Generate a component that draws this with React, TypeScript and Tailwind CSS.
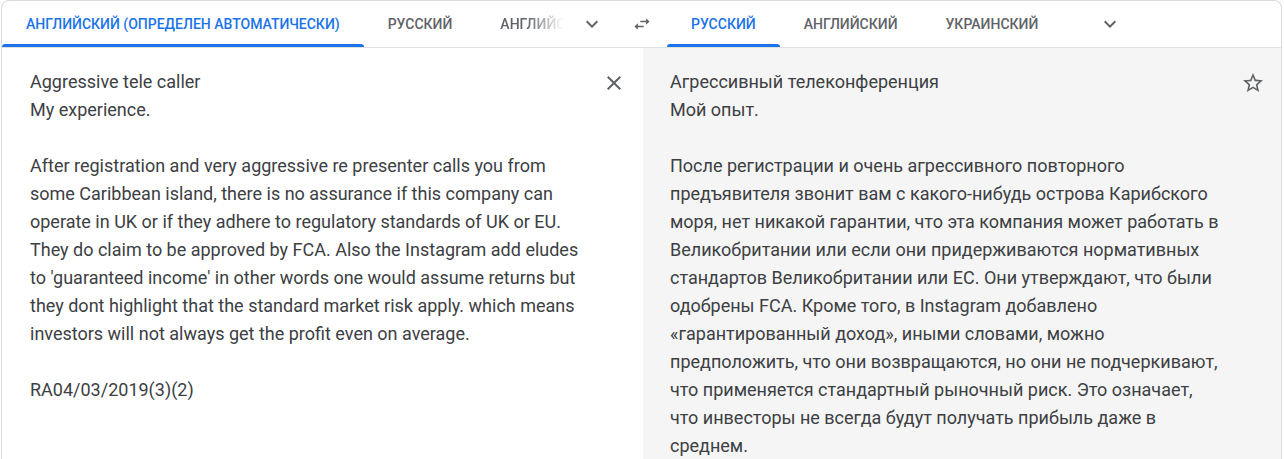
import React from 'react'

const sourceLines = [
  'Aggressive tele caller',
  'My experience.',
  '',
  'After registration and very aggressive re presenter calls you from',
  'some Caribbean island, there is no assurance if this company can',
  'operate in UK or if they adhere to regulatory standards of UK or EU.',
  'They do claim to be approved by FCA. Also the Instagram add eludes',
  "to 'guaranteed income' in other words one would assume returns but",
  'they dont highlight that the standard market risk apply. which means',
  'investors will not always get the profit even on average.',
  '',
  'RA04/03/2019(3)(2)',
]

const targetLines = [
  'Агрессивный телеконференция',
  'Мой опыт.',
  '',
  'После регистрации и очень агрессивного повторного',
  'предъявителя звонит вам с какого-нибудь острова Карибского',
  'моря, нет никакой гарантии, что эта компания может работать в',
  'Великобритании или если они придерживаются нормативных',
  'стандартов Великобритании или ЕС. Они утверждают, что были',
  'одобрены FCA. Кроме того, в Instagram добавлено',
  '«гарантированный доход», иными словами, можно',
  'предположить, что они возвращаются, но они не подчеркивают,',
  'что применяется стандартный рыночный риск. Это означает,',
  'что инвесторы не всегда будут получать прибыль даже в',
  'среднем.',
]

// material icons
const ChevronDown = () => (
  <svg viewBox="0 0 24 24" className="h-6 w-6 fill-[#5f6368]">
    <path d="M16.59 8.59L12 13.17 7.41 8.59 6 10l6 6 6-6z" />
  </svg>
)

const SwapIcon = () => (
  <svg viewBox="0 0 24 24" className="h-5 w-5 fill-[#5f6368]">
    <path d="M6.99 11L3 15l3.99 4v-3H14v-2H6.99v-3zM21 9l-3.99-4v3H10v2h7.01v3L21 9z" />
  </svg>
)

const CloseIcon = () => (
  <svg viewBox="0 0 24 24" className="h-6 w-6 fill-[#5f6368]">
    <path d="M19 6.41L17.59 5 12 10.59 6.41 5 5 6.41 10.59 12 5 17.59 6.41 19 12 13.41 17.59 19 19 17.59 13.41 12z" />
  </svg>
)

const StarIcon = () => (
  <svg viewBox="0 0 24 24" className="h-6 w-6 fill-[#5f6368]">
    <path d="M22 9.24l-7.19-.62L12 2 9.19 8.63 2 9.24l5.46 4.73L5.82 21 12 17.27 18.18 21l-1.63-7.03L22 9.24zM12 15.4l-3.76 2.27 1-4.28-3.32-2.88 4.38-.38L12 6.1l1.71 4.04 4.38.38-3.32 2.88 1 4.28L12 15.4z" />
  </svg>
)

function Tab({ label, active }: { label: string; active?: boolean }) {
  return (
    <div className="relative flex h-full shrink-0 items-center px-6">
      <span
        className={
          active
            ? 'text-[14px] font-medium text-[#1a73e8]'
            : 'text-[14px] font-medium text-[#5f6368]'
        }
      >
        {label}
      </span>
      {active && <div className="absolute bottom-0 left-0 right-0 h-[3px] rounded-t-sm bg-[#1a73e8]" />}
    </div>
  )
}

export default function App() {
  return (
    <div
      className="h-[459px] overflow-hidden bg-white pl-px pr-[2px]"
      style={{ fontFamily: 'Roboto, "Liberation Sans", sans-serif' }}
    >
      <div className="flex h-[470px] flex-col rounded-t-lg border border-b-0 border-[#dadce0]">
        {/* языковая панель */}
        <div className="flex h-[47px] shrink-0 border-b border-[#e0e0e0]">
          <div className="flex h-[46px] w-[615px] items-center">
            <Tab label="АНГЛИЙСКИЙ (ОПРЕДЕЛЕН АВТОМАТИЧЕСКИ)" active />
            <Tab label="РУССКИЙ" />
            <div className="flex h-full w-[92px] items-center overflow-hidden pl-6 [mask-image:linear-gradient(to_right,black_55%,transparent_95%)]">
              <span className="whitespace-nowrap text-[14px] font-medium text-[#5f6368]">АНГЛИЙСКИЙ</span>
            </div>
            <div className="flex w-12 justify-center">
              <ChevronDown />
            </div>
          </div>
          <div className="flex h-[46px] w-[50px] items-center justify-center">
            <SwapIcon />
          </div>
          <div className="flex h-[46px] flex-1 items-center">
            <Tab label="РУССКИЙ" active />
            <Tab label="АНГЛИЙСКИЙ" />
            <Tab label="УКРАИНСКИЙ" />
            <div className="ml-[36px] flex w-6 justify-center">
              <ChevronDown />
            </div>
          </div>
        </div>

        {/* панели текста */}
        <div className="flex flex-1">
          <div className="flex w-[641px] shrink-0 justify-between bg-white pl-[28px] pr-[17px] pt-[20px]">
            <div className="text-[18px] leading-[28px] text-[#3c4043]">
              {sourceLines.map((line, i) => (
                <div key={i} className="h-[28px] whitespace-nowrap">{line}</div>
              ))}
            </div>
            <div className="pt-[3px]">
              <CloseIcon />
            </div>
          </div>
          <div className="flex flex-1 justify-between bg-[#f5f5f5] pl-[27px] pr-[16px] pt-[20px]">
            <div className="text-[18px] leading-[28px] text-[#3c4043]">
              {targetLines.map((line, i) => (
                <div key={i} className="h-[28px] whitespace-nowrap">{line}</div>
              ))}
            </div>
            <div className="pt-[3px]">
              <StarIcon />
            </div>
          </div>
        </div>
      </div>
    </div>
  )
}
